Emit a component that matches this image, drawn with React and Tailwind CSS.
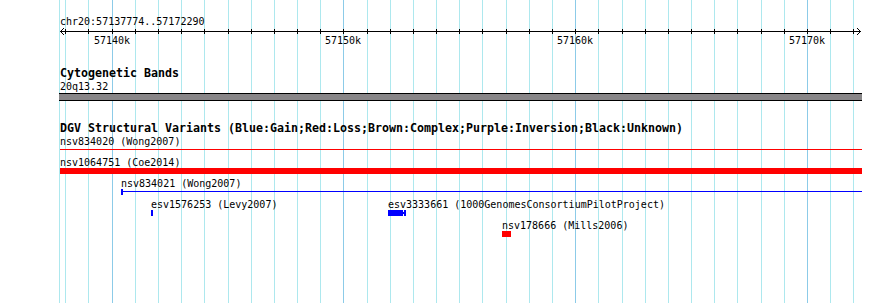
import React from "react";

// grid: one line per kb, 57140k sits at k = 0
const gridLines = [
  { x: 59, major: false },
  ...Array.from({ length: 35 }, (_, i) => {
    const k = i - 2;
    return { x: Math.round(111.6 + 23.18 * k), major: k % 10 === 0 };
  }),
];

const rulerLabels = [
  { x: 112, text: "57140k" },
  { x: 343, text: "57150k" },
  { x: 575, text: "57160k" },
  { x: 807, text: "57170k" },
];

const rows = [
  [{ name: "nsv834020 (Wong2007)", x: 60, w: 802, glyph: "line", color: "bg-[#ff0000]" }],
  [{ name: "nsv1064751 (Coe2014)", x: 60, w: 802, glyph: "box", color: "bg-[#ff0000]" }],
  [{ name: "nsv834021 (Wong2007)", x: 121, w: 741, glyph: "ticked", color: "bg-[#0000ff]" }],
  [
    { name: "esv1576253 (Levy2007)", x: 151, w: 2, glyph: "box", color: "bg-[#0000ff]" },
    { name: "esv3333661 (1000GenomesConsortiumPilotProject)", x: 388, w: 18, glyph: "split", color: "bg-[#0000ff]" },
  ],
  [{ name: "nsv178666 (Mills2006)", x: 502, w: 9, glyph: "box", color: "bg-[#ff0000]" }],
];

const GridLines = () => (
  <div className="absolute inset-0">
    {gridLines.map((l) => (
      <div
        key={l.x}
        className={`absolute top-0 bottom-0 w-px ${l.major ? "bg-[#8ccbe8]" : "bg-[#ade8ee]"}`}
        style={{ left: l.x }}
      />
    ))}
  </div>
);

const Ruler = () => (
  <svg width="890" height="20" className="block" shapeRendering="crispEdges">
    <line x1="60" x2="861" y1="3.5" y2="3.5" stroke="#000" />
    {gridLines.slice(1).map((l) => (
      <line key={l.x} x1={l.x + 0.5} x2={l.x + 0.5} y1="1" y2="6" stroke="#000" />
    ))}
    <polyline points="64,0 60.5,3.5 64,7" fill="none" stroke="#000" />
    <polyline points="857,0 860.5,3.5 857,7" fill="none" stroke="#000" />
    {rulerLabels.map((l) => (
      <text
        key={l.text}
        x={l.x}
        y="16"
        textAnchor="middle"
        fontSize="10"
        fontFamily="'DejaVu Sans Mono', monospace"
        fill="#000"
      >
        {l.text}
      </text>
    ))}
  </svg>
);

const Glyph = ({ f }) => {
  if (f.glyph === "line") {
    return <div className={`mt-[2px] h-px ${f.color}`} style={{ width: f.w }} />;
  }
  if (f.glyph === "ticked") {
    return (
      <div className="flex items-start" style={{ width: f.w }}>
        <div className={`w-[2px] h-[6px] ${f.color}`} />
        <div className={`flex-1 mt-[2px] h-px ${f.color}`} />
      </div>
    );
  }
  if (f.glyph === "split") {
    return (
      <div className="flex items-center h-[6px]" style={{ width: f.w }}>
        <div className={`w-[15px] h-[6px] ${f.color}`} />
        <div className={`w-px h-[2px] ${f.color}`} />
        <div className={`w-[2px] h-[6px] ${f.color}`} />
      </div>
    );
  }
  return <div className={`h-[6px] ${f.color}`} style={{ width: f.w }} />;
};

const Feature = ({ f }) => (
  <div className="absolute top-0" style={{ left: f.x }}>
    <div className="h-[11px] text-[10px] leading-[11px] whitespace-nowrap">{f.name}</div>
    <Glyph f={f} />
  </div>
);

export default function App() {
  return (
    <div className="relative w-[890px] h-[303px] overflow-hidden bg-white text-black font-['DejaVu_Sans_Mono',monospace]">
      <GridLines />
      <div className="relative">
        <div className="pt-[15px] pl-[60px] text-[10px] leading-[13px]">chr20:57137774..57172290</div>
        <Ruler />

        <section className="mt-[19px]">
          <h2 className="pl-[60px] text-[11.63px] leading-[13px] font-bold">Cytogenetic Bands</h2>
          <div className="pl-[60px] text-[10px] leading-[13px]">20q13.32</div>
          <div className="ml-[59px] w-[803px] h-[8px] border-y border-black bg-[#888688]" />
        </section>

        <section className="mt-[21px]">
          <h2 className="pl-[60px] text-[11.63px] leading-[13px] font-bold whitespace-nowrap">
            DGV Structural Variants (Blue:Gain;Red:Loss;Brown:Complex;Purple:Inversion;Black:Unknown)
          </h2>
          <div className="mt-px">
            {rows.map((row, i) => (
              <div key={i} className="relative h-[21px]">
                {row.map((f) => (
                  <Feature key={f.name} f={f} />
                ))}
              </div>
            ))}
          </div>
        </section>
      </div>
    </div>
  );
}
